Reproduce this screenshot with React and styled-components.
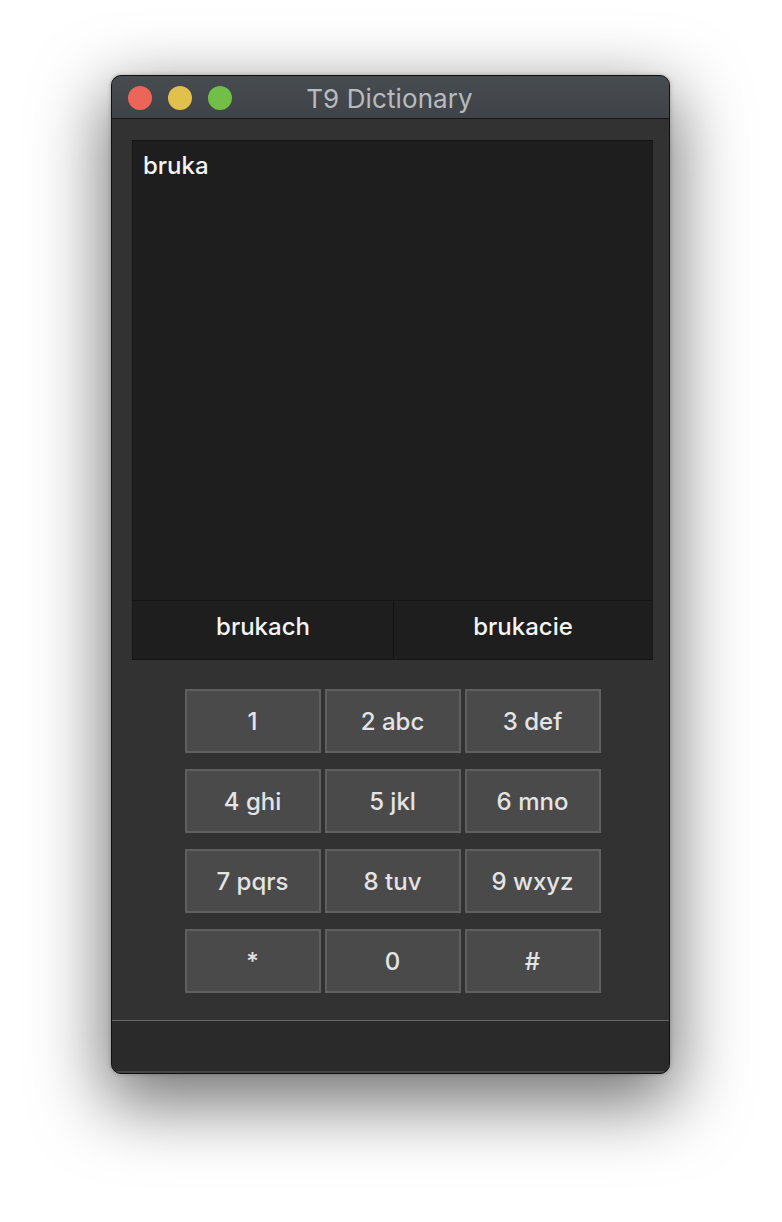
import React from "react";
import styled, { createGlobalStyle } from "styled-components";

const Global = createGlobalStyle`
  html, body { margin: 0; padding: 0; background: #ffffff; }
  body { font-family: Inter, "Noto Sans", sans-serif; }
`;

const Page = styled.div`
  padding: 75px 0 0 111px;
  height: 1147px;
`;

const Window = styled.div`
  width: 557px;
  height: 997px;
  border: 1px solid #101010;
  border-radius: 10px;
  overflow: hidden;
  background: #323232;
  display: flex;
  flex-direction: column;
  box-shadow: 0 24px 70px 6px rgba(0, 0, 0, 0.55), 0 0 4px rgba(0, 0, 0, 0.25);
`;

const TitleBar = styled.div`
  height: 42px;
  flex: none;
  position: relative;
  display: flex;
  align-items: center;
  justify-content: center;
  background: linear-gradient(#474c50, #3f4347);
  border-bottom: 1px solid #161718;
`;

const Lights = styled.div`
  position: absolute;
  left: 16px;
  top: 10px;
  display: flex;
  gap: 16px;
`;

const Light = styled.span`
  width: 24px;
  height: 24px;
  border-radius: 50%;
  background: ${(p) => p.$c};
`;

const Title = styled.div`
  color: #b7bbbf;
  font-size: 26px;
  letter-spacing: 0.1px;
  margin-left: -2px;
  margin-top: 2px;
`;

const Body = styled.div`
  flex: 1;
  display: flex;
  flex-direction: column;
  padding: 21px 16px 0 20px;
`;

const Editor = styled.div`
  height: 460px;
  flex: none;
  border: 1px solid #161616;
  border-bottom: none;
  background: #1e1e1e;
  color: #f4f4f4;
  font-size: 24px;
  font-weight: 500;
  padding: 11px 10px;
  box-sizing: border-box;
  line-height: 28px;
`;

const Suggestions = styled.div`
  display: grid;
  grid-template-columns: 260px 1fr;
  height: 60px;
  flex: none;
  box-sizing: border-box;
  border: 1px solid #161616;
  background: #1e1e1e;
`;

const Suggestion = styled.div`
  display: flex;
  align-items: center;
  justify-content: center;
  color: #f4f4f4;
  font-size: 24px;
  font-weight: 500;
  border-left: ${(p) => (p.$first ? "none" : "1px solid #131313")};
  padding-bottom: 8px;
`;

const Keypad = styled.div`
  margin: 29px auto 0;
  display: grid;
  grid-template-columns: repeat(3, 136px);
  grid-auto-rows: 64px;
  column-gap: 4px;
  row-gap: 16px;
`;

const Key = styled.div`
  box-sizing: border-box;
  border: 2px solid #5f5f5f;
  background: #4a4a4a;
  color: #e4e4e4;
  font-size: 24px;
  font-weight: 500;
  display: flex;
  align-items: center;
  justify-content: center;
`;

const Spacer = styled.div`
  flex: 1;
`;

const StatusBar = styled.div`
  height: 52px;
  flex: none;
  border-top: 1px solid #666666;
  background: #2a2a2a;
  box-shadow: inset 0 -2px 0 #444444;
`;

const keys = ["1", "2 abc", "3 def", "4 ghi", "5 jkl", "6 mno", "7 pqrs", "8 tuv", "9 wxyz", "*", "0", "#"];

export default function App() {
  return (
    <>
      <Global />
      <Page>
        <Window>
          <TitleBar>
            <Lights>
              <Light $c="#ec6559" />
              <Light $c="#e1c04b" />
              <Light $c="#71bf47" />
            </Lights>
            <Title>T9 Dictionary</Title>
          </TitleBar>
          <Body>
            <Editor>bruka</Editor>
            <Suggestions>
              <Suggestion $first>brukach</Suggestion>
              <Suggestion>brukacie</Suggestion>
            </Suggestions>
            <Keypad>
              {keys.map((k) => (
                <Key key={k}>{k}</Key>
              ))}
            </Keypad>
            <Spacer />
          </Body>
          <StatusBar />
        </Window>
      </Page>
    </>
  );
}
